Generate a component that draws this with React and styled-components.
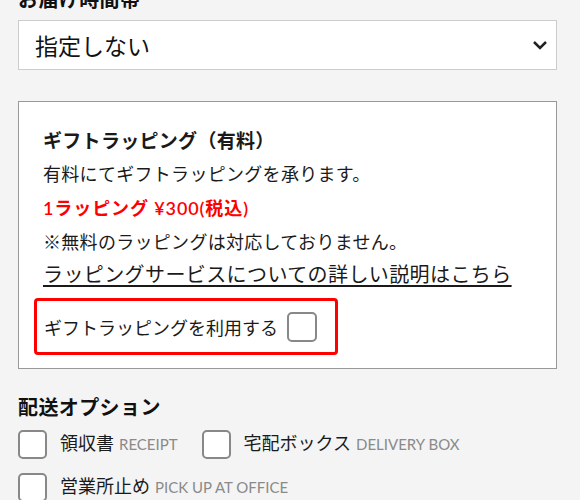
import styled, { createGlobalStyle } from "styled-components";

const GlobalStyle = createGlobalStyle`
  html, body {
    margin: 0;
    padding: 0;
    background: #f4f4f4;
  }
  body {
    font-family: Lato, "Noto Sans CJK JP", sans-serif;
    color: #1a1a1a;
  }
`;

const Page = styled.div`
  width: 539px;
  padding: 0 23px 0 18px;
  overflow: hidden;
`;

const SectionTitle = styled.h3`
  margin: 0;
  font-size: 20px;
  font-weight: 700;
  line-height: 28px;
  letter-spacing: 0.4px;
  color: #111;
`;

const TopTitle = styled(SectionTitle)`
  margin-top: -15px;
`;

const Select = styled.div`
  display: flex;
  align-items: center;
  justify-content: space-between;
  height: 48px;
  margin-top: 7px;
  padding: 0 8px 0 16px;
  background: #fff;
  border: 1px solid #ccc;
  font-size: 23px;
  color: #111;
`;

const GiftBox = styled.div`
  margin-top: 31px;
  padding: 26px 22px 13px 15px;
  background: #fff;
  border: 1px solid #999;
`;

const GiftTitle = styled.h4`
  margin: 0 0 0 9px;
  font-size: 19px;
  font-weight: 700;
  line-height: 26px;
  letter-spacing: 0.3px;
`;

const Line = styled.p`
  margin: ${(p) => p.$top || 8}px 0 0 9px;
  font-size: 18px;
  line-height: 26px;
  letter-spacing: ${(p) => (p.$red ? "0.9px" : "0.3px")};
  color: ${(p) => (p.$red ? "#f00" : "#1a1a1a")};
  font-weight: ${(p) => (p.$red ? 600 : 400)};
`;

const Link = styled.a`
  display: inline-block;
  margin: 5px 0 0 9px;
  font-size: 20px;
  line-height: 28px;
  letter-spacing: 0.4px;
  color: #1a1a1a;
  text-decoration: underline;
  text-decoration-thickness: 2px;
  text-underline-offset: 3px;
`;

const UseRow = styled.label`
  display: inline-flex;
  align-items: center;
  gap: 9px;
  margin-top: 10px;
  padding: 11px 18px 10px 7px;
  border: 3px solid #f00;
  border-radius: 4px;
  font-size: 18px;
`;

const Check = styled.span`
  display: inline-block;
  flex: none;
  width: ${(p) => p.$size || 26}px;
  height: ${(p) => p.$size || 26}px;
  border: 2px solid #888;
  border-radius: 5px;
  background: #fff;
`;

const Options = styled.div`
  margin-top: 24px;
`;

const OptionGrid = styled.div`
  display: flex;
  flex-wrap: wrap;
  column-gap: 24px;
  row-gap: 13px;
  margin-top: 8px;
`;

const Option = styled.label`
  display: flex;
  align-items: center;
  gap: 13px;
  font-size: 18px;
  line-height: 29px;
  flex-basis: ${(p) => (p.$full ? "100%" : "auto")};
`;

const En = styled.span`
  margin-left: 5px;
  font-size: 15px;
  color: #8a8a8a;
  letter-spacing: 0;
`;

const Chevron = () => (
  <svg width="16" height="10" viewBox="0 0 16 10">
    <path d="M2 2l6 6 6-6" fill="none" stroke="#222" strokeWidth="2.5" />
  </svg>
);

export default function App() {
  return (
    <Page>
      <GlobalStyle />
      <TopTitle>お届け時間帯</TopTitle>
      <Select>
        指定しない
        <Chevron />
      </Select>

      <GiftBox>
        <GiftTitle>ギフトラッピング（有料）</GiftTitle>
        <Line $top={7}>有料にてギフトラッピングを承ります。</Line>
        <Line $red>1ラッピング ¥300(税込)</Line>
        <Line>※無料のラッピングは対応しておりません。</Line>
        <Link href="#">ラッピングサービスについての詳しい説明はこちら</Link>
        <div>
          <UseRow>
            ギフトラッピングを利用する
            <Check />
          </UseRow>
        </div>
      </GiftBox>

      <Options>
        <SectionTitle>配送オプション</SectionTitle>
        <OptionGrid>
          <Option>
            <Check $size={25} />
            <span>
              領収書<En>RECEIPT</En>
            </span>
          </Option>
          <Option>
            <Check $size={25} />
            <span>
              宅配ボックス<En>DELIVERY BOX</En>
            </span>
          </Option>
          <Option $full>
            <Check $size={25} />
            <span>
              営業所止め<En>PICK UP AT OFFICE</En>
            </span>
          </Option>
        </OptionGrid>
      </Options>
    </Page>
  );
}
